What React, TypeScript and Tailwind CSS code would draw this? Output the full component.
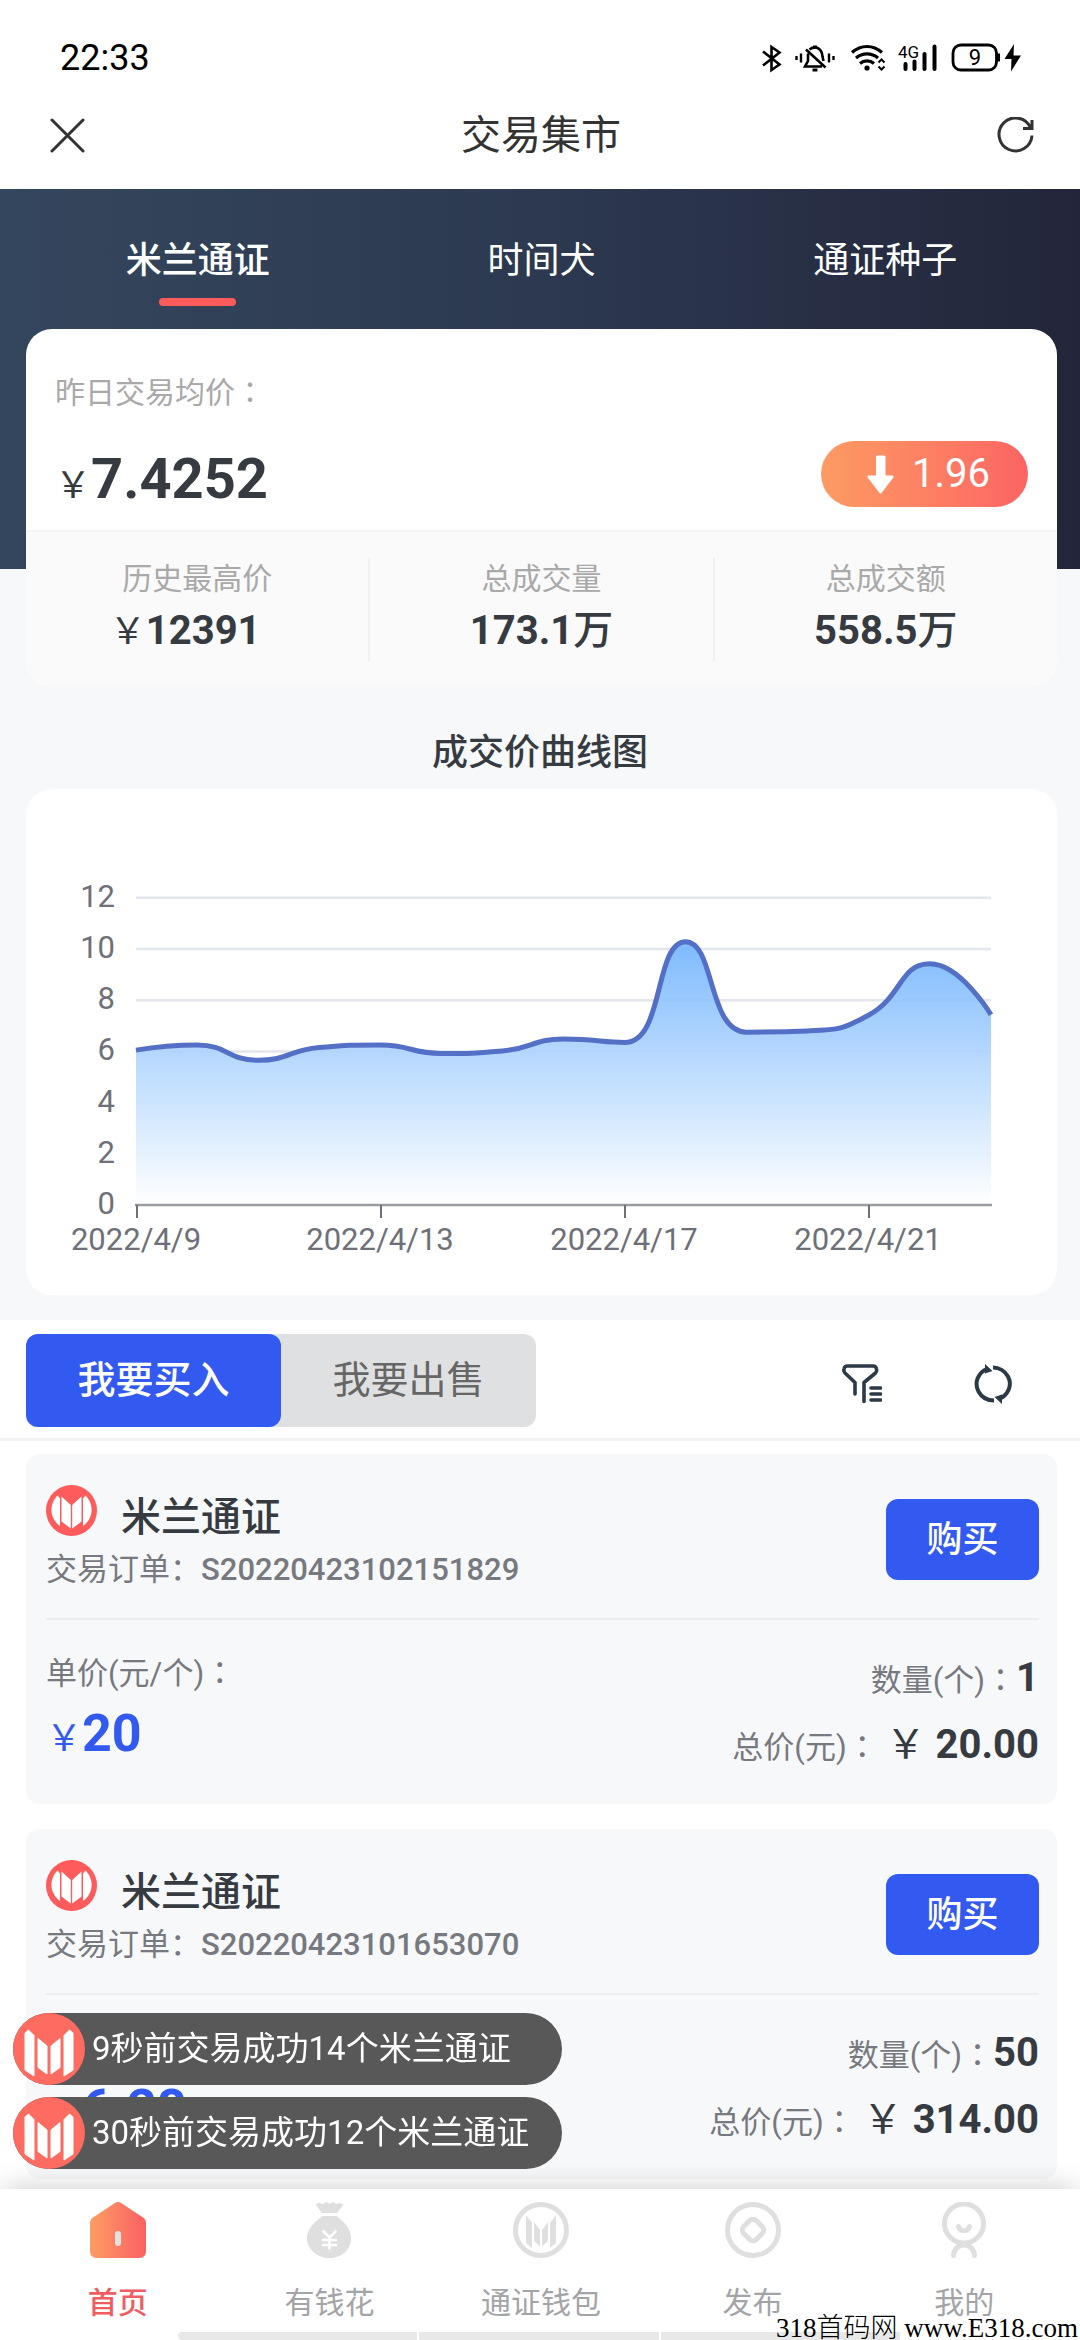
import { useState } from 'react'
import type { ReactNode } from 'react'

interface Order {
  id: string
  price: string
  count: number
  total: string
}

const tokens = ['米兰通证', '时间犬', '通证种子']

const orders: Order[] = [
  { id: 'S20220423102151829', price: '20', count: 1, total: '20.00' },
  { id: 'S20220423101653070', price: '6.28', count: 50, total: '314.00' },
]

const notices = ['9秒前交易成功14个米兰通证', '30秒前交易成功12个米兰通证']

const prices = [6.05, 6.25, 5.65, 6.15, 6.25, 5.92, 6.02, 6.48, 6.35, 10.28, 6.75, 6.8, 7.42, 9.42, 7.43]
const dates = ['2022/4/9', '2022/4/13', '2022/4/17', '2022/4/21']

// Plot area inside the 1031 x 506 chart
const LEFT = 110
const RIGHT = 965
const BOTTOM = 416
const UNIT = 25.6

const clamp = (v: number, a: number, b: number) => Math.max(Math.min(a, b), Math.min(Math.max(a, b), v))

function smoothPath(values: number[]) {
  const step = (RIGHT - LEFT) / (values.length - 1)
  const pts = values.map((v, i) => ({ x: LEFT + i * step, y: BOTTOM - v * UNIT }))
  let d = `M${pts[0].x} ${pts[0].y}`
  let c0 = pts[0]
  for (let i = 1; i < pts.length; i++) {
    const prev = pts[i - 1]
    const p = pts[i]
    const next = pts[i + 1]
    let c1 = p
    let nextC0 = p
    if (next) {
      const lenPrev = Math.hypot(p.x - prev.x, p.y - prev.y)
      const lenNext = Math.hypot(next.x - p.x, next.y - p.y)
      const ratio = (0.5 * lenNext) / (lenNext + lenPrev)
      const nx = clamp(p.x + (next.x - prev.x) * ratio, p.x, next.x)
      const ny = clamp(p.y + (next.y - prev.y) * ratio, p.y, next.y)
      c1 = {
        x: clamp(p.x - ((nx - p.x) * lenPrev) / lenNext, prev.x, p.x),
        y: clamp(p.y - ((ny - p.y) * lenPrev) / lenNext, prev.y, p.y),
      }
      nextC0 = {
        x: p.x + ((p.x - c1.x) * lenNext) / lenPrev,
        y: p.y + ((p.y - c1.y) * lenNext) / lenPrev,
      }
    }
    d += `C${c0.x} ${c0.y} ${c1.x} ${c1.y} ${p.x} ${p.y}`
    c0 = nextC0
  }
  return d
}

function StatusBar() {
  return (
    <div className="flex items-center justify-between pt-[34px] pl-[60px] pr-[58px]">
      <span className="text-[36px] leading-[48px] text-black">22:33</span>
      <svg className="h-8 w-[262px]" viewBox="760 41 262 32" fill="none" stroke="#000">
        {/* bluetooth */}
        <path d="M763 50.500L779.500 63.500L771.500 69V46L779.500 51.500L763 64.500" strokeWidth="2.600" />
        {/* muted bell */}
        <path d="M796.500 55v4M801 52.500v9M829 52.500v9M833.500 55v4" strokeWidth="2.400" />
        <path d="M809.500 48.500C816 43.500 822 48 822.500 55.500L823.500 60M808 52.500V60L805 65.500H822M806 48.500L825.500 66.500" strokeWidth="2.600" />
        <path d="M813 46h4M812.500 69h5" strokeWidth="3" />
        {/* wifi */}
        <path d="M852 51.500C861 43.500 873 43.500 882 51.500M856 57C862.500 51.500 871.500 51.500 878 57M860 62.500C864 59 870 59 874 62.500" strokeWidth="3.200" />
        <circle cx="867" cy="67" r="2.600" fill="#000" stroke="none" />
        <path d="M878.500 61.500L881.500 58.500L884.500 61.500M878.500 65.500L881.500 68.500L884.500 65.500" strokeWidth="2" />
        {/* signal */}
        <text x="898" y="56.500" fontSize="17" fill="#000" stroke="none">4G</text>
        <path d="M905.500 63v5M914.500 60.500v7.500M924.500 53v15M934.500 45.500v22.500" strokeWidth="4" strokeLinecap="round" />
        {/* battery */}
        <rect x="953" y="44" width="43.500" height="25" rx="8" strokeWidth="2.800" />
        <path d="M998.500 52.500v8" strokeWidth="3" />
        <text x="975" y="64" fontSize="22" textAnchor="middle" fill="#000" stroke="none">9</text>
        <path d="M1014 43L1004.500 58H1011.500L1011 70.500L1021 54.500H1013.500Z" fill="#000" stroke="none" />
      </svg>
    </div>
  )
}

function CoinLogo() {
  return (
    <svg className="size-[51px] shrink-0" viewBox="0 0 51 51">
      <circle cx="25.500" cy="25.500" r="25.500" fill="#fe5b5c" />
      <g fill="#fff">
        <path d="M11.500 10.500L14 13.500V41C3 33 3 19 11.500 10.500Z" />
        <path d="M39.500 10.500L37 13.500V41C48 33 48 19 39.500 10.500Z" />
        <path d="M15.500 11.500L24.800 20V43.500L15.500 36.500Z" />
        <path d="M35.500 11.500L26.200 20V43.500L35.500 36.500Z" />
      </g>
    </svg>
  )
}

function NoticeLogo() {
  return (
    <svg className="size-[72px] shrink-0" viewBox="0 0 72 72">
      <circle cx="36" cy="36" r="36" fill="#fd6b61" />
      <g fill="#fff" stroke="#fff" strokeLinejoin="round">
        <path d="M12 20L15.500 17L21 22.500V63L12 57Z" />
        <path d="M60 20L56.500 17L51 22.500V63L60 57Z" />
        <path d="M25 25.500L34 33V61L25 54.500Z" />
        <path d="M47 25.500L38 33V61L47 54.500Z" />
      </g>
    </svg>
  )
}

function PriceChart() {
  const line = smoothPath(prices)
  return (
    <svg className="block w-full" viewBox="0 0 1031 506" fill="none" role="img" aria-label="成交价曲线图">
      <defs>
        <linearGradient id="area" x1="0" y1="0" x2="0" y2="1">
          <stop offset="0" stopColor="#70b3fd" stopOpacity="0.9" />
          <stop offset="1" stopColor="#fff" stopOpacity="0.9" />
        </linearGradient>
      </defs>
      {[2, 4, 6, 8, 10, 12].map((v) => (
        <path key={v} d={`M${LEFT} ${BOTTOM - v * UNIT}H${RIGHT}`} stroke="#e3e6ed" strokeWidth="2.500" />
      ))}
      <path d={`${line}V${BOTTOM}H${LEFT}Z`} fill="url(#area)" />
      <path d={`M${LEFT - 1} ${BOTTOM}H${RIGHT + 1}`} stroke="#9a9ca1" strokeWidth="2.500" />
      <path d={line} stroke="#5470c6" strokeWidth="5" strokeLinejoin="bevel" />
      <g fontSize="31" fill="#6e7079">
        {[0, 2, 4, 6, 8, 10, 12].map((v) => (
          <text key={v} x="89" y={BOTTOM - v * UNIT + 9} textAnchor="end">{v}</text>
        ))}
        {dates.map((date, i) => (
          <g key={date}>
            <path d={`M${LEFT + 1 + i * 244} ${BOTTOM}v13`} stroke="#6e7079" strokeWidth="2" />
            <text x={LEFT + i * 244} y="461" textAnchor="middle">{date}</text>
          </g>
        ))}
      </g>
    </svg>
  )
}

// Full-width colon set in the middle of its cell
function Colon() {
  return <span className="font-['Noto_Sans_CJK_TC',sans-serif] leading-none">：</span>
}

function Stat({ label, children }: { label: string; children: ReactNode }) {
  return (
    <div className="flex h-[103px] flex-1 flex-col items-center gap-2 pt-px">
      <span className="text-[30px] leading-10 text-[#a9a9a9]">{label}</span>
      {children}
    </div>
  )
}

function OrderCard({ order }: { order: Order }) {
  return (
    <article className="rounded-[14px] bg-[#f6f8fa] pt-[31px] pr-[18px] pb-[35px] pl-5">
      <div className="flex items-center justify-between border-b-2 border-[#ecedef] pb-6">
        <div>
          <div className="flex gap-6">
            <CoinLogo />
            <h3 className="pt-[5px] text-[40px] leading-[56px] font-medium text-[#363b42]">米兰通证</h3>
          </div>
          <p className="text-[31px] leading-[48px] text-[#76797f]">
            交易订单：<span className="font-medium">{order.id}</span>
          </p>
        </div>
        <button className="h-[81px] w-[153px] rounded-xl bg-[#335af0] text-[36px] font-medium text-white">购买</button>
      </div>
      <div className="flex justify-between pt-[34px] text-[31px] text-[#76797f]">
        <div className="flex flex-col gap-3">
          <span className="leading-10">单价(元/个)<Colon /></span>
          <span className="text-[52px] leading-[56px] font-bold text-[#335af0]">
            <span className="text-[36px] leading-none font-normal">￥</span>{order.price}
          </span>
        </div>
        <div className="flex flex-col items-end gap-[19px]">
          <span className="text-[40px] leading-[48px] font-bold text-[#363b42]">
            <span className="text-[31px] leading-none font-normal text-[#76797f]">数量(个)<Colon /></span>
            {order.count}
          </span>
          <span className="text-[40px] leading-[48px] font-bold text-[#363b42]">
            <span className="mr-2 text-[31px] leading-none font-normal text-[#76797f]">总价(元)<Colon /></span>
            <span className="font-normal">￥ </span>
            {order.total}
          </span>
        </div>
      </div>
    </article>
  )
}

function NavItem({ label, active, children }: { label: string; active?: boolean; children: ReactNode }) {
  return (
    <a href="#" className="flex flex-1 flex-col items-center gap-[25px]">
      <svg className="size-14" viewBox="0 0 56 56" fill="none">{children}</svg>
      <span className={`text-[30px] leading-10 ${active ? 'font-medium text-[#ee5d62]' : 'text-[#a3a4a8]'}`}>{label}</span>
    </a>
  )
}

function BottomNav() {
  return (
    <nav className="relative z-10 mt-auto flex bg-white pt-[13px] pr-2.5 pb-[17px] pl-3 shadow-[0_-8px_24px_-4px_rgba(0,0,0,0.16)]">
      <NavItem label="首页" active>
        <defs>
          <linearGradient id="home">
            <stop stopColor="#fc9d63" />
            <stop offset="1" stopColor="#fb6063" />
          </linearGradient>
        </defs>
        <path d="M24.500 1.200Q28 -1.200 31.500 1.200L53 15.500Q56 17.500 56 21V49Q56 56 49 56H7Q0 56 0 49V21Q0 17.500 3 15.500Z" fill="url(#home)" />
        <rect x="25" y="29" width="6" height="15" rx="3" fill="#e2e2e2" />
      </NavItem>
      <NavItem label="有钱花">
        <path d="M14.500 2.500L18 1L22 2L25.500 0L29 2L32 0L35.500 2L39 1L42.500 2.500L36 11H21Z" fill="#dfdfdf" />
        <path d="M21.500 14H35.500C42 19 50 26 50 36C50 48 40.500 56 28.500 56S6 48 6 36C6 26 15 19 21.500 14Z" fill="#dfdfdf" />
        <path d="M22.500 29.500L28.500 35.500L34.500 29.500M22 38H35M22 43H35M28.500 35.500V46.500" stroke="#fff" strokeWidth="2.600" strokeLinecap="round" />
      </NavItem>
      <NavItem label="通证钱包">
        <circle cx="28" cy="28" r="25.500" stroke="#dfdfdf" strokeWidth="5" />
        <g fill="#dfdfdf">
          <path d="M13 13L19 21V46L13 41Z" />
          <path d="M21 20L27 28V44.500L21 39Z" />
          <path d="M43 13L37 21V46L43 41Z" />
          <path d="M35 20L29 28V44.500L35 39Z" />
        </g>
      </NavItem>
      <NavItem label="发布">
        <g stroke="#dfdfdf" strokeWidth="5">
          <circle cx="28" cy="28" r="25.500" />
          <rect x="19" y="19" width="18" height="18" rx="5" transform="rotate(45 28 28)" />
        </g>
      </NavItem>
      <NavItem label="我的">
        <g stroke="#dfdfdf" strokeWidth="5" strokeLinecap="round">
          <circle cx="28" cy="21.500" r="19.500" />
          <path d="M22.500 24.500C24 30 32 30 33.500 24.500M17.500 53.500C18.500 39.500 37.500 39.500 38.500 53.500" />
        </g>
      </NavItem>
      <div className="absolute right-[180px] bottom-0 left-[178px] flex h-2 gap-0.5 overflow-hidden rounded-l">
        <i className="flex-1 bg-[#e8e8e8]" />
        <i className="flex-1 bg-[#e8e8e8]" />
        <i className="flex-1 bg-[#e8e8e8]" />
      </div>
      <span className="absolute right-0.5 bottom-0 font-['Liberation_Serif','Noto_Sans_CJK_SC',serif] text-[27px] leading-6 font-light whitespace-pre text-black">
        318首码网 www.E318.com
      </span>
    </nav>
  )
}

function App() {
  const [token, setToken] = useState(tokens[0])
  const [side, setSide] = useState<'buy' | 'sell'>('buy')

  return (
    <div className="flex min-h-screen flex-col bg-white font-['Roboto','Noto_Sans_CJK_SC',sans-serif]">
      <StatusBar />

      {/* Title bar */}
      <header className="flex h-[107px] items-center justify-between pr-[46px] pl-[50px]">
        <button aria-label="关闭">
          <svg className="size-[35px]" viewBox="0 0 35 35" stroke="#333" strokeWidth="3" strokeLinecap="round">
            <path d="M2 2L33 33M33 2L2 33" />
          </svg>
        </button>
        <h1 className="text-[40px] leading-[48px] text-[#333]">交易集市</h1>
        <button aria-label="刷新">
          <svg className="size-[37px]" viewBox="0 0 37 37" fill="none" stroke="#333" strokeWidth="3">
            <path d="M33.500 10.500A16.500 16.500 0 1 0 35 18.500M35 3V11.500H26" />
          </svg>
        </button>
      </header>

      <main className="bg-[#f7f8fa]">
        {/* Token tabs */}
        <div className="flex bg-linear-to-r from-[#34465d] via-[#2c3950] to-[#23263a] pt-12 pr-[23px] pb-[263px] pl-[26px]">
          {tokens.map((t) => (
            <button
              key={t}
              onClick={() => setToken(t)}
              className={`flex flex-1 flex-col items-center gap-[13px] text-[36px] leading-[48px] text-white ${t === token ? 'font-medium' : ''}`}
            >
              {t}
              <span className={`h-2 w-[77px] rounded ${t === token ? 'bg-[#ff5b5d]' : ''}`} />
            </button>
          ))}
        </div>

        {/* Price summary */}
        <section className="-mt-60 mr-[23px] ml-[26px] overflow-hidden rounded-[26px] bg-white">
          <div className="px-[29px] pt-11 pb-[23px]">
            <p className="text-[30px] leading-10 text-[#a9a9a9]">昨日交易均价<Colon /></p>
            <div className="mt-7 flex items-end justify-between">
              <p className="text-[56px] leading-[56px] font-bold text-[#363b42]">
                <span className="text-[36px] leading-none font-normal">￥</span>7.4252
              </p>
              <div className="flex h-[66px] w-[207px] items-center justify-center gap-[18px] rounded-full bg-linear-to-r from-[#fd9b63] to-[#fc6463] pl-2 text-[40px] text-white">
                <svg className="h-[39px] w-[27px]" viewBox="0 0 27 39" fill="currentColor">
                  <path d="M10.500 0.500H17Q18.500 0.500 18.500 2V20.500H25Q27.500 20.500 26 23L14.500 38Q13.500 39 12.500 38L1 23Q-0.500 20.500 2 20.500H9V2Q9 0.500 10.500 0.500Z" />
                </svg>
                1.96
              </div>
            </div>
          </div>
          <div className="flex divide-x-2 divide-[#f0f0f0] border-t-2 border-[#f3f3f3] bg-[#fafafa] py-[26px]">
            <Stat label="历史最高价">
              <span className="pr-6 text-[40px] leading-[48px] font-bold text-[#363b42]">
                <span className="text-[36px] leading-none font-normal">￥</span>12391
              </span>
            </Stat>
            <Stat label="总成交量">
              <span className="text-[40px] leading-[48px] font-bold text-[#363b42]">173.1<span className="font-medium">万</span></span>
            </Stat>
            <Stat label="总成交额">
              <span className="text-[40px] leading-[48px] font-bold text-[#363b42]">558.5<span className="font-medium">万</span></span>
            </Stat>
          </div>
        </section>

        {/* Price chart */}
        <h2 className="mt-[42px] mb-3 text-center text-[36px] leading-[48px] font-medium text-[#363b42]">成交价曲线图</h2>
        <section className="mr-[23px] mb-[25px] ml-[26px] rounded-[26px] bg-white">
          <PriceChart />
        </section>
      </main>

      {/* Buy / sell switch */}
      <div className="flex items-center justify-between border-b-3 border-[#f2f2f2] pt-[14px] pr-[66px] pb-[11px] pl-[26px]">
        <div className="flex rounded-xl bg-[#dfe0e2]">
          <button
            onClick={() => setSide('buy')}
            className={`h-[93px] w-[255px] rounded-xl text-[38px] ${side === 'buy' ? 'bg-[#335af0] font-medium text-white' : 'text-[#666]'}`}
          >
            我要买入
          </button>
          <button
            onClick={() => setSide('sell')}
            className={`h-[93px] w-[255px] rounded-xl text-[38px] ${side === 'sell' ? 'bg-[#335af0] font-medium text-white' : 'text-[#666]'}`}
          >
            我要出售
          </button>
        </div>
        <div className="flex gap-[92px] pt-1.5 text-[#2b3a46]">
          <button aria-label="筛选">
            <svg className="size-10" viewBox="0 0 40 40" fill="none" stroke="currentColor" strokeWidth="3.600" strokeLinecap="round" strokeLinejoin="round">
              <path d="M13 30V18.500L3 9Q1.500 7.500 2 5Q2.500 2 5.500 2H31Q34 2 34.500 5Q35 7.500 33.500 9L22 18.500V37.500M29 24H38.500M29 30H38.500M29 36H38.500" />
            </svg>
          </button>
          <button aria-label="换一批">
            <svg className="size-10" viewBox="0 0 40 40" fill="none" stroke="currentColor" strokeWidth="4">
              <path d="M13.500 4.500C3.500 9 0 19 4.500 27.500C7.500 33 13 36.500 20 36.500M24.500 35.500C34.500 31 38.500 21 34 12.500C31 7 25 3.500 19 3.500" />
              <path d="M11 0L18.500 7L11 9.500ZM28 40L20.500 33L28 30.500Z" fill="currentColor" stroke="none" />
            </svg>
          </button>
        </div>
      </div>

      {/* Orders */}
      <section className="flex flex-col gap-[25px] pt-[13px] pr-[23px] pb-[9px] pl-[26px]">
        {orders.map((order) => (
          <OrderCard key={order.id} order={order} />
        ))}
      </section>

      {/* Trade notices */}
      <div className="fixed bottom-[171px] left-[13px] z-20 flex w-[549px] flex-col gap-3">
        {notices.map((text) => (
          <div key={text} className="flex items-center gap-[7px] rounded-full bg-[#585858] text-[33px] whitespace-nowrap text-white">
            <NoticeLogo />
            {text}
          </div>
        ))}
      </div>

      <BottomNav />
    </div>
  )
}

export default App
